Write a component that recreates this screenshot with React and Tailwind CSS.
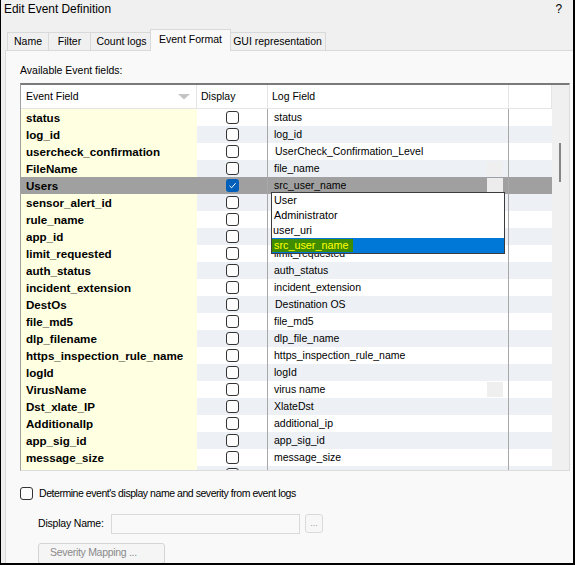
import React from 'react';

const rows = [
  { name: 'status', log: 'status' },
  { name: 'log_id', log: 'log_id' },
  { name: 'usercheck_confirmation', log: 'UserCheck_Confirmation_Level', indent: true },
  { name: 'FileName', log: 'file_name', box: true },
  { name: 'Users', log: 'src_user_name', box: true, selected: true, checked: true },
  // log fields of the next three rows sit under the open list
  { name: 'sensor_alert_id', log: '' },
  { name: 'rule_name', log: '' },
  { name: 'app_id', log: '' },
  { name: 'limit_requested', log: 'limit_requested' },
  { name: 'auth_status', log: 'auth_status' },
  { name: 'incident_extension', log: 'incident_extension' },
  { name: 'DestOs', log: 'Destination OS', indent: true },
  { name: 'file_md5', log: 'file_md5' },
  { name: 'dlp_filename', log: 'dlp_file_name' },
  { name: 'https_inspection_rule_name', log: 'https_inspection_rule_name' },
  { name: 'logId', log: 'logId' },
  { name: 'VirusName', log: 'virus name', box: true },
  { name: 'Dst_xlate_IP', log: 'XlateDst' },
  { name: 'AdditionalIp', log: 'additional_ip' },
  { name: 'app_sig_id', log: 'app_sig_id' },
  { name: 'message_size', log: 'message_size' },
  { name: '', log: '' },
];

const tabs = ['Name', 'Filter', 'Count logs', 'Event Format', 'GUI representation'];

const Checkbox = ({ checked }) =>
  checked ? (
    <div className="w-[13px] h-[13px] rounded-[3px] bg-[#005fb8] flex items-center justify-center">
      <svg width="9" height="9" viewBox="0 0 9 9">
        <path d="M1.5 4.8 L3.6 6.8 L7.6 2.2" fill="none" stroke="#fff" strokeWidth="1" />
      </svg>
    </div>
  ) : (
    <div className="w-[13px] h-[13px] rounded-[3px] border border-[#333] bg-[#fdfdfd]" />
  );

const Row = ({ row, i }) => {
  const alt = i % 2 === 1;
  const bg = row.selected ? 'bg-[#a0a0a0]' : alt ? 'bg-[#edf0f5]' : 'bg-white';
  return (
    <div className="flex h-[17px] shrink-0">
      <div
        className={`w-[176px] pl-[5px] flex items-center font-bold text-[11.6px] text-black ${
          row.selected ? 'bg-[#a0a0a0]' : 'bg-[#ffffe1]'
        }`}
      >
        {row.name}
      </div>
      <div className={`w-[71px] border-r border-[#a8a8a8] flex items-center justify-center ${bg}`}>
        <Checkbox checked={row.checked} />
      </div>
      <div
        className={`w-[241px] border-r border-[#a8a8a8] flex items-center relative ${bg} ${
          row.indent ? 'pl-[7px]' : 'pl-[6px]'
        }`}
      >
        {row.log}
        {row.box && (
          <div
            className={`absolute left-[219px] top-[1px] w-[16px] h-[15px] ${
              row.selected ? 'bg-[#ececec]' : 'bg-[#efefef]'
            }`}
          />
        )}
      </div>
      <div className={`flex-1 ${bg}`} />
    </div>
  );
};

const App = () => {
  return (
    <div className="w-[575px] h-[565px] bg-[#f0f0f0] border-l border-r-2 border-b-2 border-black flex flex-col overflow-hidden font-['Liberation_Sans',Arial,sans-serif] text-[10.5px] text-black">
      {/* title bar */}
      <div className="h-[20px] shrink-0 flex items-center justify-between pl-[3px] pr-[11px] text-[11.9px]">
        <span>Edit Event Definition</span>
        <span>?</span>
      </div>

      {/* tabs */}
      <div className="h-[30px] shrink-0 flex items-end pl-[6px]">
        {tabs.map((t, i) => {
          const widths = ['w-[41px]', 'w-[42px]', 'w-[62px]', 'w-[81px]', 'w-[97px]'];
          if (t === 'Event Format') {
            return (
              <div
                key={t}
                className="w-[81px] h-[22px] -mb-px -mx-[2px] relative z-10 bg-[#f9f9f9] border-t border-l border-r border-[#d9d9d9] flex items-center justify-center pb-[2px]"
              >
                {t}
              </div>
            );
          }
          return (
            <div
              key={t}
              className={`${widths[i]} h-[18px] border-t border-l border-[#d9d9d9] flex items-center justify-center ${
                i === tabs.length - 1 ? 'border-r' : ''
              }`}
            >
              {t}
            </div>
          );
        })}
      </div>

      {/* panel */}
      <div className="flex-1 ml-[4px] bg-[#f9f9f9] border-l border-t border-[#d9d9d9] pl-[14px]">
        <div className="mt-[12px] leading-[14px]">Available Event fields:</div>

        {/* table */}
        <div className="mt-[6px] w-[550px] h-[388px] flex border-t-2 border-t-[#7a7a7a] border-l border-l-[#a0a0a0] border-r border-r-[#dcdcdc] border-b border-b-[#dcdcdc]">
          <div className="w-[531px] flex flex-col">
            <div className="h-[24px] shrink-0 flex bg-white border-b border-[#e5e5e5]">
              <div className="w-[176px] border-r border-[#e5e5e5] flex items-center justify-between pl-[5px] pr-[6px]">
                <span>Event Field</span>
                <svg width="12" height="6" viewBox="0 0 12 6">
                  <path d="M0 0 L12 0 L6 5.5 Z" fill="#c4c4c4" />
                </svg>
              </div>
              <div className="w-[71px] border-r border-[#e5e5e5] flex items-center pl-[4px]">Display</div>
              <div className="w-[241px] border-r border-[#e5e5e5] flex items-center pl-[4px]">Log Field</div>
              <div className="flex-1 border-r border-[#e5e5e5]" />
            </div>

            <div className="h-[361px] relative overflow-hidden flex flex-col">
              {rows.map((row, i) => (
                <Row key={i} row={row} i={i} />
              ))}

              {/* open dropdown */}
              <div className="absolute left-[250px] top-[83px] w-[234px] h-[62px] z-20 bg-white border border-[#3c3c3c] flex flex-col text-[10.8px]">
                <div className="h-[15px] flex items-center pl-[2px]">User</div>
                <div className="h-[15px] flex items-center pl-[2px]">Administrator</div>
                <div className="h-[15px] flex items-center pl-[1px]">user_uri</div>
                <div className="h-[15px] flex items-center bg-[#0078d7]">
                  <span className="h-[13px] flex items-center bg-[#3f8c00] text-[#ffff00] pl-[2px] pr-[5px]">
                    src_user_name
                  </span>
                </div>
              </div>
            </div>
          </div>

          {/* scrollbar */}
          <div className="w-[17px] bg-[#f0f0f0] flex justify-start">
            <div className="ml-[7px] mt-[58px] w-[2px] h-[39px] bg-[#858585]" />
          </div>
        </div>

        {/* bottom options */}
        <div className="mt-[15px] flex items-center gap-[6px]">
          <div className="w-[13px] h-[13px] rounded-[3px] border border-[#333] bg-[#fdfdfd]" />
          <span className="tracking-[-0.45px]">Determine event's display name and severity from event logs</span>
        </div>

        <div className="mt-[12px] flex items-center pl-[18px]">
          <span className="w-[73px] tracking-[-0.2px]">Display Name:</span>
          <div className="w-[189px] h-[20px] border border-[#d9d9d9] bg-[#f9f9f9]" />
          <div className="ml-[5px] w-[18px] h-[19px] border border-[#dadada] rounded-[3px] bg-[#f7f7f7] flex items-center justify-center text-[#9a9a9a] text-[9px]">
            ...
          </div>
        </div>

        <div className="mt-[9px] ml-[18px] w-[127px] h-[21px] border border-[#d4d4d4] rounded-[3px] bg-[#f5f5f5] flex items-center pl-[11px] text-[#8a8a8a] tracking-[-0.3px]">
          Severity Mapping ...
        </div>
      </div>
    </div>
  );
};

export default App;
